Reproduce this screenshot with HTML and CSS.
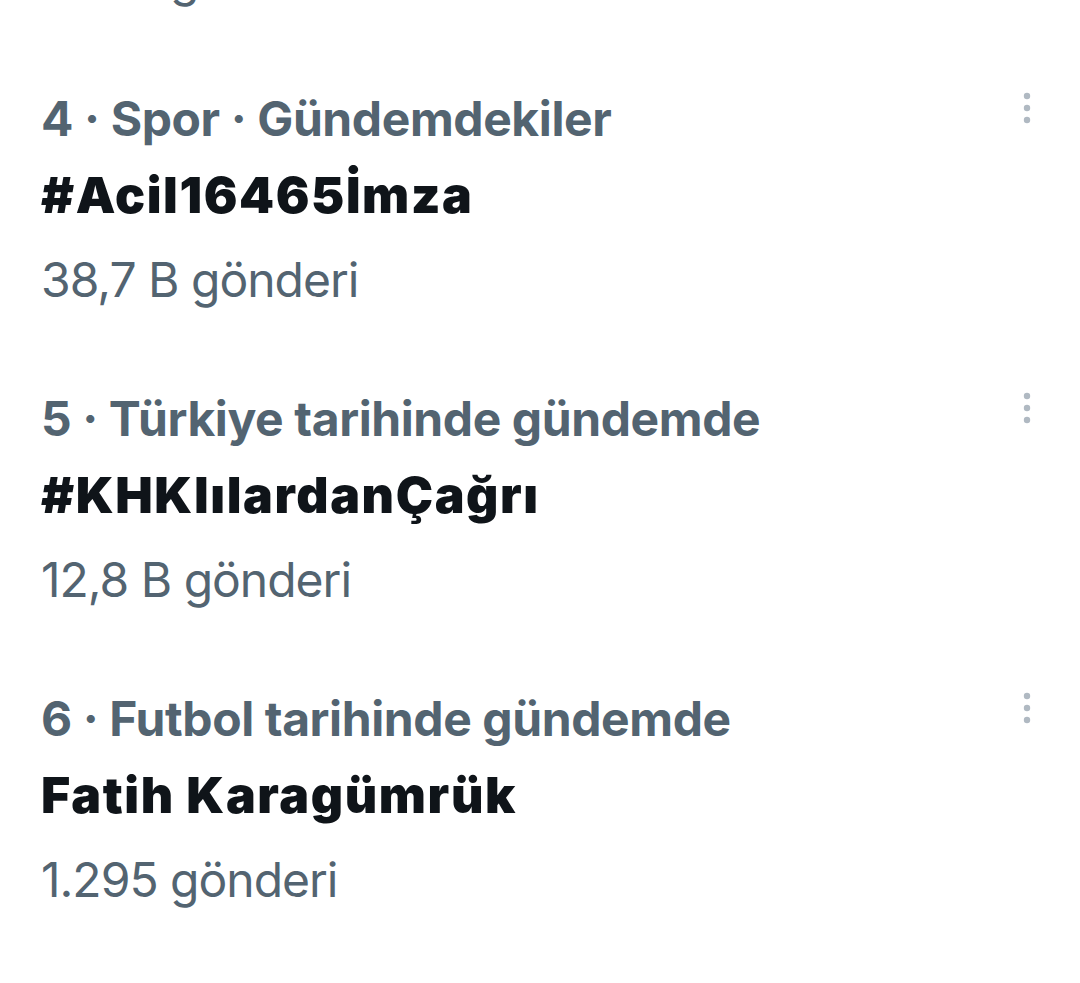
FILE: index.html
```html
<!DOCTYPE html>
<html lang="tr">
<head>
<meta charset="utf-8">
<link rel="stylesheet" href="styles.css">
</head>
<body>
<div class="prev-tail"><div class="count">1.295 gönderi</div></div>
<div class="list">
  <div class="item">
    <div class="meta-row">
      <div class="meta">4 · Spor · Gündemdekiler</div>
      <svg class="more" width="12" height="36" viewBox="0 0 12 36"><circle cx="6" cy="6" r="3.2"/><circle cx="6" cy="18" r="3.2"/><circle cx="6" cy="30" r="3.2"/></svg>
    </div>
    <div class="title">#Acil16465İmza</div>
    <div class="count">38,7 B gönderi</div>
  </div>
  <div class="item">
    <div class="meta-row">
      <div class="meta">5 · Türkiye tarihinde gündemde</div>
      <svg class="more" width="12" height="36" viewBox="0 0 12 36"><circle cx="6" cy="6" r="3.2"/><circle cx="6" cy="18" r="3.2"/><circle cx="6" cy="30" r="3.2"/></svg>
    </div>
    <div class="title">#KHKlılardanÇağrı</div>
    <div class="count">12,8 B gönderi</div>
  </div>
  <div class="item">
    <div class="meta-row">
      <div class="meta">6 · Futbol tarihinde gündemde</div>
      <svg class="more" width="12" height="36" viewBox="0 0 12 36"><circle cx="6" cy="6" r="3.2"/><circle cx="6" cy="18" r="3.2"/><circle cx="6" cy="30" r="3.2"/></svg>
    </div>
    <div class="title">Fatih Karagümrük</div>
    <div class="count">1.295 gönderi</div>
  </div>
</div>
</body>
</html>
```
FILE: styles.css
```css
html, body {
  margin: 0;
  padding: 0;
  background: #ffffff;
}
body {
  font-family: Inter, "Noto Sans", sans-serif;
  width: 1080px;
  height: 983px;
  overflow: hidden;
}
.prev-tail {
  height: 54px;
  overflow: hidden;
  padding-left: 41px;
}
.prev-tail .count {
  margin-top: -66px;
}
.list {
  display: flex;
  flex-direction: column;
}
.item {
  padding: 29px 41px 29px 41px;
  height: 300px;
  box-sizing: border-box;
}
.meta-row {
  display: flex;
  justify-content: space-between;
  align-items: flex-start;
}
.meta {
  font-size: 48px;
  font-weight: 700;
  line-height: 72px;
  letter-spacing: -0.4px;
  color: #536471;
}
.more {
  fill: #b0b9c2;
  margin-top: 7px;
  margin-right: 6px;
}
.title {
  font-size: 50px;
  font-weight: 900;
  line-height: 80px;
  letter-spacing: 1.6px;
  color: #0f1419;
}
.count {
  font-size: 48px;
  font-weight: 400;
  line-height: 90px;
  letter-spacing: -1px;
  color: #536471;
}
```
